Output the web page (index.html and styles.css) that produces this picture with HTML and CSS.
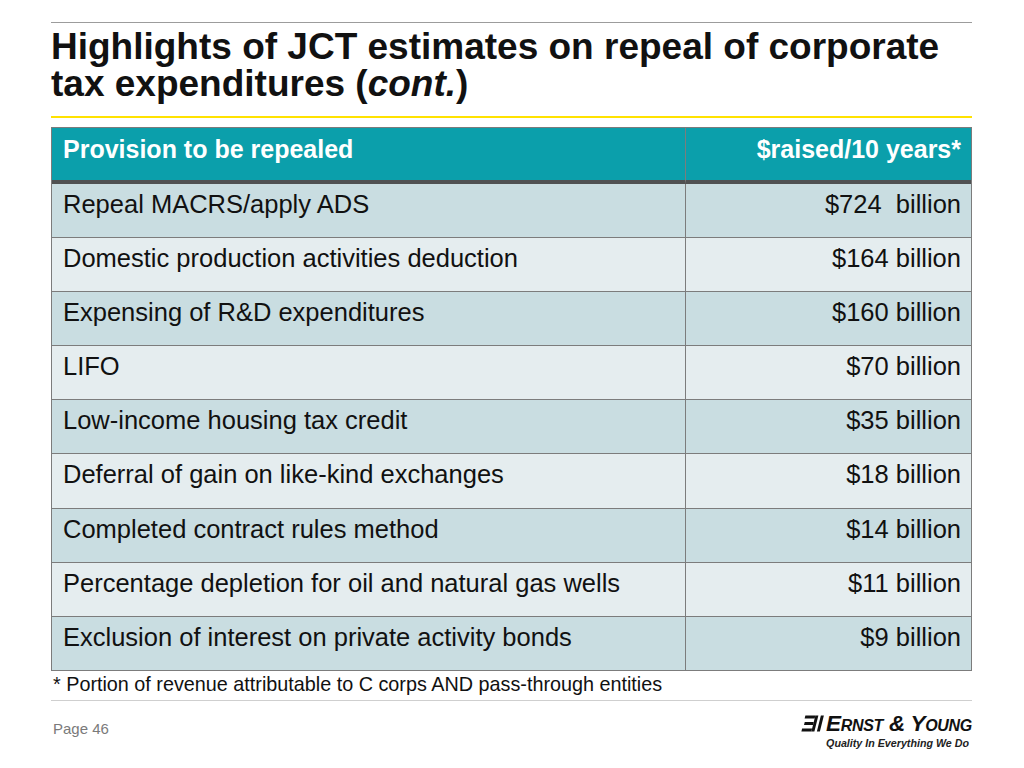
FILE: index.html
```html
<!DOCTYPE html>
<html lang="en">
<head>
<meta charset="utf-8">
<title>Highlights of JCT estimates</title>
<link rel="stylesheet" href="styles.css">
</head>
<body>
<div class="slide">
  <div class="rule-top"></div>
  <h1 class="title">Highlights of JCT estimates on repeal of corporate<br>tax expenditures (<em>cont.</em>)</h1>
  <div class="rule-yellow"></div>

  <div class="grid">
    <div class="cell head">Provision to be repealed</div>
    <div class="cell head num">$raised/10 years*</div>

    <div class="cell dark">Repeal MACRS/apply ADS</div>
    <div class="cell dark num">$724&nbsp; billion</div>

    <div class="cell light">Domestic production activities deduction</div>
    <div class="cell light num">$164 billion</div>

    <div class="cell dark">Expensing of R&amp;D expenditures</div>
    <div class="cell dark num">$160 billion</div>

    <div class="cell light">LIFO</div>
    <div class="cell light num">$70 billion</div>

    <div class="cell dark">Low-income housing tax credit</div>
    <div class="cell dark num">$35 billion</div>

    <div class="cell light">Deferral of gain on like-kind exchanges</div>
    <div class="cell light num">$18 billion</div>

    <div class="cell dark">Completed contract rules method</div>
    <div class="cell dark num">$14 billion</div>

    <div class="cell light">Percentage depletion for oil and natural gas wells</div>
    <div class="cell light num">$11 billion</div>

    <div class="cell dark">Exclusion of interest on private activity bonds</div>
    <div class="cell dark num">$9 billion</div>
  </div>

  <p class="note">* Portion of revenue attributable to C corps AND pass-through entities</p>
  <div class="rule-bottom"></div>

  <div class="footer">
    <div class="page">Page 46</div>
    <div class="logo">
      <div class="brand">
        <svg class="mark" width="23" height="17" viewBox="0 0 23 17" aria-hidden="true">
          <g transform="skewX(-14) translate(4 0)">
            <rect x="0.5" y="0.5" width="10" height="3" fill="#111"/>
            <rect x="1.5" y="7" width="9" height="3" fill="#111"/>
            <rect x="0.5" y="13.5" width="10" height="3" fill="#111"/>
            <rect x="10.5" y="0.5" width="3" height="16" fill="#111"/>
            <rect x="16" y="0.5" width="3" height="16" fill="#111"/>
          </g>
        </svg>
        <span class="wordmark">Ernst &amp; Young</span>
      </div>
      <div class="tagline">Quality In Everything We Do</div>
    </div>
  </div>
</div>
</body>
</html>
```

FILE: styles.css
```css
html, body {
  margin: 0;
  padding: 0;
  background: #ffffff;
}

body {
  font-family: "Liberation Sans", Arial, sans-serif;
  color: #111;
}

.slide {
  width: 921px;
  margin-left: 51px;
  padding-top: 22px;
}

.rule-top {
  height: 1px;
  background: #9c9c9c;
}

.title {
  margin: 5px 0 0 0;
  font-size: 37px;
  line-height: 37px;
  font-weight: 700;
  color: #111;
}

.title em {
  font-style: italic;
}

.rule-yellow {
  margin-top: 14px;
  height: 2px;
  background: #ffe200;
}

.grid {
  margin-top: 9px;
  display: grid;
  grid-template-columns: 634px 1fr;
  grid-template-rows: 56px repeat(9, 54.1px);
  border: 1px solid #7c7c7c;
  border-bottom: none;
}

.cell {
  box-sizing: border-box;
  padding: 6px 10px 0 11px;
  font-size: 25.5px;
  line-height: 28px;
  color: #111;
  border-bottom: 1px solid #7c7c7c;
  white-space: nowrap;
}

.cell:nth-child(odd) {
  border-right: 1px solid #7c7c7c;
}

.num {
  text-align: right;
}

.head {
  padding-top: 7px;
  font-size: 25px;
  background: #0b9fab;
  color: #ffffff;
  font-weight: 700;
  border-bottom: 4px solid #4f5152;
}

.dark {
  background: #c9dde1;
}

.light {
  background: #e5edef;
}

.note {
  margin: 2px 0 0 0;
  padding-left: 2px;
  font-size: 19.8px;
  line-height: 22px;
  color: #111;
}

.rule-bottom {
  margin-top: 5px;
  height: 1px;
  background: #cfcfcf;
}

.footer {
  display: flex;
  justify-content: space-between;
  align-items: flex-start;
}

.page {
  margin-top: 19px;
  padding-left: 2px;
  font-size: 15px;
  line-height: 17px;
  color: #7a7a7a;
}

.logo {
  margin-top: 12px;
  display: flex;
  flex-direction: column;
  align-items: flex-end;
}

.brand {
  display: flex;
  align-items: center;
  gap: 2px;
}

.mark {
  display: block;
}

.wordmark {
  font-family: "Liberation Sans", Arial, sans-serif;
  font-style: italic;
  font-weight: 700;
  font-variant: small-caps;
  font-size: 22.5px;
  line-height: 22px;
  letter-spacing: -0.3px;
  color: #111;
}

.tagline {
  margin-top: 2px;
  margin-right: 3px;
  font-family: "Liberation Sans", Arial, sans-serif;
  font-style: italic;
  font-weight: 700;
  font-size: 10.7px;
  line-height: 13px;
  color: #222;
}
```
